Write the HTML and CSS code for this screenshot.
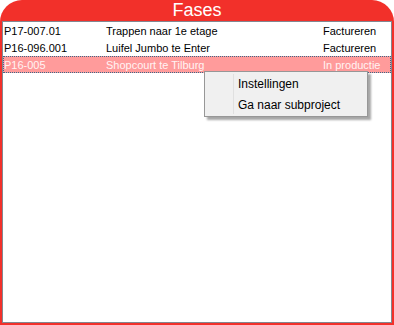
FILE: index.html
```html
<!DOCTYPE html>
<html>
<head>
<meta charset="utf-8">
<link rel="stylesheet" href="styles.css">
</head>
<body>
<div class="frame">
  <div class="header">Fases</div>
  <div class="list">
    <div class="row">
      <span class="c1">P17-007.01</span><span class="c2">Trappen naar 1e etage</span><span class="c3">Factureren</span>
    </div>
    <div class="row">
      <span class="c1">P16-096.001</span><span class="c2">Luifel Jumbo te Enter</span><span class="c3">Factureren</span>
    </div>
    <div class="row selected">
      <span class="c1">P16-005</span><span class="c2">Shopcourt te Tilburg</span><span class="c3">In productie</span>
    </div>
  </div>
  <div class="menu">
    <div class="menu-item">Instellingen</div>
    <div class="menu-item">Ga naar subproject</div>
  </div>
</div>
</body>
</html>
```
FILE: styles.css
```css
html, body {
  margin: 0;
  padding: 0;
  background: #ffffff;
}
.frame {
  position: relative;
  width: 394px;
  height: 325px;
  box-sizing: border-box;
  background: #f2302a;
  border-radius: 22px 22px 0 0;
  padding: 0 2px 2px 2px;
  display: flex;
  flex-direction: column;
  font-family: Tahoma, "Liberation Sans", Arial, sans-serif;
  font-size: 11px;
}
.header {
  height: 21px;
  line-height: 21px;
  text-align: center;
  color: #ffffff;
  font-size: 18px;
}
.list {
  flex: 1;
  background: #ffffff;
  border: 1px solid #828790;
  display: flex;
  flex-direction: column;
}
.row {
  height: 17px;
  display: flex;
  align-items: center;
  color: #000000;
  box-sizing: border-box;
}
.c1 { width: 102px; padding-left: 1px; }
.c2 { width: 217px; }
.c3 { flex: 1; }
.row.selected {
  background: #ff9b9b;
  color: #fff3f3;
  border: 1px dotted #3a6a8a;
}
.row.selected .c1 { padding-left: 0; }
.menu {
  position: absolute;
  left: 204px;
  top: 71px;
  width: 164px;
  height: 46px;
  box-sizing: border-box;
  background: #f0f0f0;
  border: 1px solid #979797;
  box-shadow: 3px 3px 2px rgba(0,0,0,0.35);
  padding: 2px 0;
  display: flex;
  flex-direction: column;
}
.menu::before {
  content: "";
  position: absolute;
  left: 28px;
  top: 2px;
  bottom: 2px;
  width: 1px;
  background: #e0e0e0;
}
.menu-item {
  height: 21px;
  line-height: 21px;
  padding-left: 33px;
  color: #000000;
  font-size: 12px;
}
```
